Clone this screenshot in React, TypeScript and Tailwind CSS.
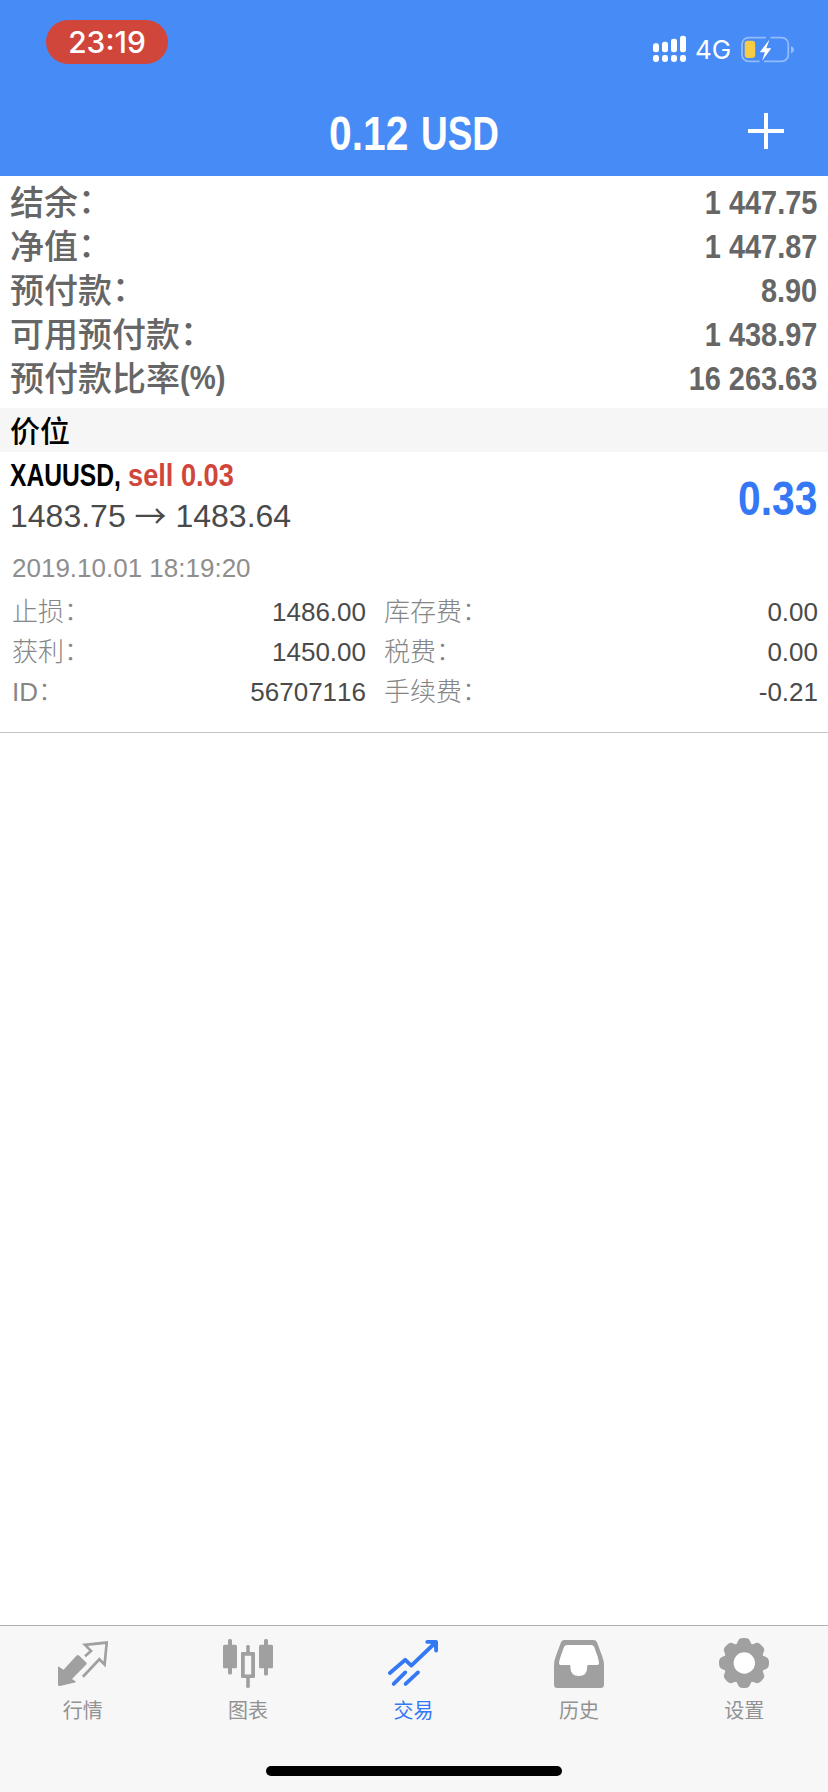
import type { ReactNode } from "react";

const latin = "font-['Liberation_Sans','Noto_Sans_CJK_SC',sans-serif]";
const cjk = "font-['Noto_Sans_CJK_SC',sans-serif]";

const summary = [
  { label: "结余", colon: true, value: "1 447.75" },
  { label: "净值", colon: true, value: "1 447.87" },
  { label: "预付款", colon: true, value: "8.90" },
  { label: "可用预付款", colon: true, value: "1 438.97" },
  { label: "预付款比率", colon: false, value: "16 263.63" },
];

const details = [
  { left: "止损", leftValue: "1486.00", right: "库存费", rightValue: "0.00" },
  { left: "获利", leftValue: "1450.00", right: "税费", rightValue: "0.00" },
  { left: "ID", leftValue: "56707116", right: "手续费", rightValue: "-0.21" },
];

function SignalIcon() {
  const tops = [42.3, 40.7, 37.7, 34.7];
  return (
    <svg width="34" height="28" viewBox="653 34 34 28" fill="#fff">
      {tops.map((top, i) => (
        <g key={top}>
          <rect x={653 + i * 9} y={top} width="6" height={51.3 - top} rx="2.4" />
          <rect x={653 + i * 9} y="54" width="6" height="7" rx="2.4" />
        </g>
      ))}
    </svg>
  );
}

function BatteryIcon() {
  return (
    <svg width="54" height="28" viewBox="740 35 54 28" fill="none">
      <g stroke="#fff" strokeOpacity="0.42" strokeWidth="1.8">
        <path d="M766 37.7H748.5a6.5 6.5 0 0 0-6.5 6.5v10.6a6.5 6.5 0 0 0 6.5 6.5H759.5" />
        <path d="M770.5 37.7H781.8a6.5 6.5 0 0 1 6.5 6.5v10.6a6.5 6.5 0 0 1-6.5 6.5H764" />
      </g>
      <path d="M791 46.3c2.2.8 3 2 3 3.5s-.8 2.7-3 3.5z" fill="#fff" fillOpacity="0.45" />
      <rect x="744.7" y="40.7" width="10.5" height="17.4" rx="3" fill="#f6cb45" />
      <path d="M769.5 39.5 759.7 52.2h5.2L762 61l9.3-12.8h-5z" fill="#fff" />
    </svg>
  );
}

function QuotesIcon() {
  return (
    <svg width="50" height="50" viewBox="0 0 50 50">
      <path
        d="M24.9 38.7 41.4 21.3 46.6 26.6 48.7 4.6 27 6.9 33 12.9 27 18.2"
        fill="none"
        stroke="currentColor"
        strokeWidth="2.7"
      />
      <path
        d="M18.6 17.4q1.2-.9 2.4.2l7.3 6.8q1 1 0 2L14 40.9l3.4 2.4q1 1-.4 1.3L2 48q-2 .2-2-1.6V28.2l5.6 3.6z"
        fill="currentColor"
      />
    </svg>
  );
}

function ChartIcon() {
  return (
    <svg width="50" height="50" viewBox="0 0 50 50" fill="currentColor">
      <rect x="0" y="6.7" width="14" height="23.6" rx="1.5" />
      <rect x="5" y="1" width="4" height="35.6" rx="1.6" />
      <rect x="36" y="6.7" width="14" height="23.6" rx="1.5" />
      <rect x="41" y="1" width="4" height="36.6" rx="1.6" />
      <path
        fillRule="evenodd"
        d="M19.3 14h3.9V8.3q0-1.3 1.8-1.3t1.8 1.3V14h3.9q1.3 0 1.3 1.3v23.4q0 1.3-1.3 1.3h-3.9v8.7q0 1.3-1.8 1.3t-1.8-1.3V40h-3.9q-1.3 0-1.3-1.3V15.3q0-1.3 1.3-1.3zM21.8 17.8v18.6h6.4V17.8z"
      />
    </svg>
  );
}

function TradeIcon() {
  return (
    <svg
      width="50"
      height="50"
      viewBox="0 0 50 50"
      fill="none"
      stroke="currentColor"
      strokeWidth="3.8"
      strokeLinecap="round"
      strokeLinejoin="round"
    >
      <path d="M1.9 35 17.3 21.8 23.3 27.6 47 5" />
      <path d="M39.3 3.9H48.1V12.6" />
      <path d="M43 5.5h3.5V9z" strokeWidth="1" fill="currentColor" />
      <path d="M5.7 45.9 17.3 34.4M17.6 45.9 30 34.4" />
    </svg>
  );
}

function HistoryIcon() {
  return (
    <svg width="50" height="50" viewBox="0 0 50 50" fill="currentColor">
      <path d="M10.5 2h29q2.6 0 3.6 2.4l5 13.6Q50 23 50 27v19.500q0 3.500-3.500 3.500h-43Q0 50 0 46.500V27q0-4 1.900-9l5-13.600Q7.900 2 10.500 2z" />
      <path
        fill="#fff"
        d="M13 7h24.200q2.200 0 3 2l3.400 9.500Q45 23 45 25.300q0 1.700-1.500 1.700H34q-.8 0-.8 1.300v1q0 8.700-8.400 8.700t-8.400-8.700v-1q0-1.300-.8-1.300H6.600Q5 27 5 25.300q0-2.300 1.600-6.800L10 9q.8-2 3-2z"
      />
    </svg>
  );
}

function SettingsIcon() {
  const teeth = [0, 45, 90, 135, 180, 225, 270, 315];
  return (
    <svg width="50" height="50" viewBox="0 0 50 50" fill="currentColor">
      <circle cx="25" cy="25" r="20.300" />
      {teeth.map((angle) => (
        <path
          key={angle}
          transform={`rotate(${angle} 25 25)`}
          d="M16 8 Q18 6 18.800 3.500 Q19.600 .8 22 .3 Q25-.3 28 .3 Q30.400 .8 31.200 3.500 Q32 6 34 8z"
        />
      ))}
      <circle cx="25.300" cy="25" r="10.700" fill="#fff" />
    </svg>
  );
}

const tabs: { label: string; icon: ReactNode; active?: boolean }[] = [
  { label: "行情", icon: <QuotesIcon /> },
  { label: "图表", icon: <ChartIcon /> },
  { label: "交易", icon: <TradeIcon />, active: true },
  { label: "历史", icon: <HistoryIcon /> },
  { label: "设置", icon: <SettingsIcon /> },
];

function DetailLabel({ text }: { text: string }) {
  return (
    <span className="flex text-[26px] font-light text-[#868686]">
      {text}
      <span className={`-translate-y-[3px] ${cjk}`}>：</span>
    </span>
  );
}

export default function App() {
  return (
    <div className={`flex h-[1792px] w-[828px] flex-col overflow-hidden bg-white [font-kerning:none] ${latin}`}>
      <header className="h-44 shrink-0 bg-[#468bf6] text-white">
        <div className="flex h-[88px] items-start justify-between pl-[46px] pr-[34px] pt-5">
          <div className="flex h-[44px] w-[122px] items-center justify-center rounded-full bg-[#d1463b] font-['Inter',sans-serif] text-[30px] font-medium leading-none">
            23:19
          </div>
          <div className="flex h-[58px] items-center">
            <SignalIcon />
            <span className="ml-[8px] w-[37px] pt-0.5 font-['Inter',sans-serif] text-[26px] leading-none">4G</span>
            <span className="ml-[8px]">
              <BatteryIcon />
            </span>
          </div>
        </div>
        <div className="grid h-[88px] grid-cols-[1fr_auto_1fr] items-center">
          <span />
          <h1 className="flex pt-[3px] text-[48px] font-bold leading-none">
            <span className="w-[92px] origin-left scale-x-[0.85] whitespace-nowrap">0.12</span>
            <span className="w-[78px] origin-left scale-x-[0.77] whitespace-nowrap">USD</span>
          </h1>
          <svg className="mb-0.5 mr-11 justify-self-end" width="36" height="36" viewBox="0 0 36 36">
            <path d="M0 18H36M18 0V36" stroke="#fff" strokeWidth="4" />
          </svg>
        </div>
      </header>

      <section className="pb-2 pl-[10px] pr-[11px] pt-1 text-[#666]">
        {summary.map((row) => (
          <div key={row.label} className="flex h-11 items-center justify-between text-[34px] leading-[44px]">
            <span className={`flex -translate-y-px font-medium ${cjk}`}>
              {row.label}
              {row.colon ? (
                <span className="-translate-y-0.5">：</span>
              ) : (
                <span className="origin-left scale-x-[0.86] font-['Liberation_Sans'] font-bold">(%)</span>
              )}
            </span>
            <span className="origin-right scale-x-[0.85] whitespace-nowrap font-bold">{row.value}</span>
          </div>
        ))}
      </section>

      <h2 className={`h-11 bg-[#f6f6f6] pl-[10px] text-[30px] font-medium leading-[42px] text-black ${cjk}`}>价位</h2>

      <section className="h-[281px] border-b border-[#c4c4c4]">
        <div className="flex h-[90px] items-start justify-between pl-[10px] pr-[11px] pt-[3px]">
          <div>
            <div className="flex h-[41px] items-center text-[32px] font-bold leading-[41px]">
              <span className="w-[118px] origin-left scale-x-[0.770] whitespace-nowrap text-black">XAUUSD,</span>
              <span className="origin-left scale-x-[0.850] whitespace-nowrap text-[#d1463b]">sell 0.03</span>
            </div>
            <div className="flex h-[41px] items-center whitespace-pre text-[32px] leading-[41px] text-[#4a4a4a]">
              1483.75 <span className={`-translate-y-0.5 ${cjk}`}>→</span> 1483.64
            </div>
          </div>
          <span className="mt-5 origin-right scale-x-[0.850] text-[48px] font-bold leading-none text-[#3478f6]">0.33</span>
        </div>
        <div className="mt-[6px] h-[40px] pl-3 text-[26px] leading-[40px] text-[#8e8e8e]">2019.10.01 18:19:20</div>
        <div className="mt-[4px] pl-3 pr-[10px] text-[26px] leading-[40px] text-[#4a4a4a]">
          {details.map((row) => (
            <div key={row.left} className="grid h-10 grid-cols-[354px_1fr] gap-[18px]">
              <div className="flex justify-between">
                <DetailLabel text={row.left} />
                <span>{row.leftValue}</span>
              </div>
              <div className="flex justify-between">
                <DetailLabel text={row.right} />
                <span>{row.rightValue}</span>
              </div>
            </div>
          ))}
        </div>
      </section>

      <main className="flex-1" />

      <nav className="flex h-[167px] shrink-0 flex-col items-center border-t border-[#b2b2b2] bg-[#f7f7f7]">
        <div className="grid w-full grid-cols-5 pr-px pt-3">
          {tabs.map((tab) => (
            <button
              key={tab.label}
              className={`flex flex-col items-center ${tab.active ? "text-[#3478f6]" : "text-[#a0a0a0]"}`}
            >
              {tab.icon}
              <span className={`mt-[7px] text-[20px] leading-[30px] ${cjk} ${tab.active ? "" : "text-[#929292]"}`}>
                {tab.label}
              </span>
            </button>
          ))}
        </div>
        <div className="mb-4 mt-auto h-[10px] w-[296px] rounded-full bg-black" />
      </nav>
    </div>
  );
}
